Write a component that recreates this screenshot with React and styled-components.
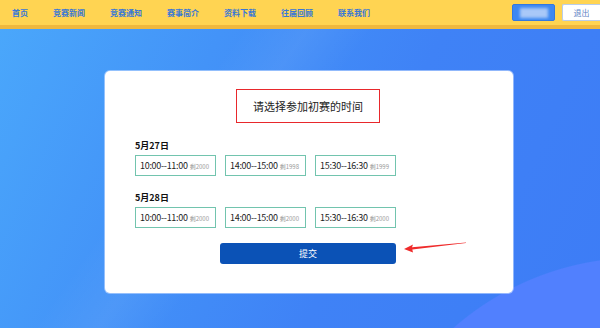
import React from "react";
import styled, { createGlobalStyle } from "styled-components";

const Global = createGlobalStyle`
  html, body { margin: 0; padding: 0; }
  body {
    width: 600px;
    height: 328px;
    overflow: hidden;
    font-family: "Noto Sans CJK SC", "Noto Sans", sans-serif;
  }
`;

const Page = styled.div`
  width: 600px;
  height: 328px;
  display: flex;
  flex-direction: column;
`;

const Header = styled.header`
  height: 25px;
  flex: none;
  background: #ffd452;
  border-bottom: 4px solid #efb83e;
  display: flex;
  align-items: center;
  padding-left: 12px;
`;

const Nav = styled.nav`
  display: flex;
  gap: 25px;
  flex: 1;
`;

const NavItem = styled.a`
  font-size: 8px;
  line-height: 10px;
  font-weight: 700;
  color: #3877d6;
  text-decoration: none;
  padding-top: 1px;
`;

const UserArea = styled.div`
  display: flex;
  gap: 7px;
  align-items: center;
`;

const UserBtn = styled.div`
  width: 43px;
  height: 17px;
  box-sizing: border-box;
  border-radius: 2px;
  background: #3c87f1;
  border: 1px solid #3278e0;
  display: flex;
  align-items: center;
  justify-content: center;
`;

const Blurred = styled.span`
  width: 28px;
  height: 10px;
  background: rgba(205, 222, 250, 0.75);
  filter: blur(1.5px);
`;

const LogoutBtn = styled.div`
  width: 38px;
  height: 17px;
  box-sizing: border-box;
  border-radius: 2px 0 0 2px;
  background: #fff;
  border: 1px solid #b9cdea;
  border-right: none;
  font-size: 8px;
  color: #5c82c4;
  display: flex;
  align-items: center;
  justify-content: center;
`;

const Main = styled.main`
  flex: 1;
  position: relative;
  overflow: hidden;
  padding: 42px 0 0 105px;
  background:
    radial-gradient(circle 283px at 640px 511px, #5180fe 99.6%, rgba(81,128,254,0) 100%),
    linear-gradient(125deg, rgba(255,255,255,0) 30%, rgba(255,255,255,0.06) 38%, rgba(255,255,255,0) 46%),
    linear-gradient(115deg, #4aa7fb 0%, #4393f8 30%, #3f82f6 60%, #3d7cf6 100%);
`;

const Card = styled.section`
  position: relative;
  width: 408px;
  height: 222px;
  box-sizing: border-box;
  background: #fff;
  border-radius: 5px;
  box-shadow: 0 0 0 1px rgba(200, 220, 255, 0.6);
  padding: 18px 30px 0;
  display: flex;
  flex-direction: column;
`;

const TitleBox = styled.div`
  align-self: center;
  width: 144px;
  height: 34px;
  box-sizing: border-box;
  border: 1.5px solid #e8282c;
  display: flex;
  align-items: center;
  justify-content: center;
  font-size: 11px;
  color: #222;
  margin-right: 2px;
`;

const DateLabel = styled.div`
  margin-top: ${p => p.$top}px;
  font-size: 9px;
  line-height: 12px;
  font-weight: 700;
  color: #111;
`;

const SlotRow = styled.div`
  margin-top: 3px;
  display: flex;
  gap: 9px;
`;

const Slot = styled.div`
  width: 81px;
  height: 21px;
  box-sizing: border-box;
  border: 1.5px solid #72c4ae;
  display: flex;
  align-items: center;
  padding-left: 4px;
  gap: 2px;
  white-space: nowrap;
`;

const SlotTime = styled.span`
  font-size: 9px;
  color: #1d1d1d;
  letter-spacing: -0.3px;
`;

const SlotLeft = styled.span`
  font-size: 6px;
  color: #9a9a9a;
  padding-top: 1px;
`;

const Submit = styled.button`
  align-self: center;
  margin-top: 15px;
  margin-right: 2px;
  width: 176px;
  height: 21px;
  border: none;
  border-radius: 3px;
  background: #0b52b6;
  color: #fff;
  font-family: inherit;
  font-size: 9px;
  padding: 0;
`;

const Arrow = styled.svg`
  position: absolute;
  left: 295px;
  top: 170px;
  overflow: visible;
`;

const days = [
  { date: "5月27日", top: 17, slots: [["10:00--11:00", "2000"], ["14:00--15:00", "1998"], ["15:30--16:30", "1999"]] },
  { date: "5月28日", top: 16, slots: [["10:00--11:00", "2000"], ["14:00--15:00", "2000"], ["15:30--16:30", "2000"]] },
];

export default function App() {
  const navs = ["首页", "竞赛新闻", "竞赛通知", "赛事简介", "资料下载", "往届回顾", "联系我们"];
  return (
    <Page>
      <Global />
      <Header>
        <Nav>
          {navs.map(n => <NavItem key={n}>{n}</NavItem>)}
        </Nav>
        <UserArea>
          <UserBtn><Blurred /></UserBtn>
          <LogoutBtn>退出</LogoutBtn>
        </UserArea>
      </Header>
      <Main>
        <Card>
          <TitleBox>请选择参加初赛的时间</TitleBox>
          {days.map(d => (
            <React.Fragment key={d.date}>
              <DateLabel $top={d.top}>{d.date}</DateLabel>
              <SlotRow>
                {d.slots.map(([t, n]) => (
                  <Slot key={t}>
                    <SlotTime>{t}</SlotTime>
                    <SlotLeft>剩{n}</SlotLeft>
                  </Slot>
                ))}
              </SlotRow>
            </React.Fragment>
          ))}
          <Submit>提交</Submit>
          <Arrow width="70" height="12" viewBox="0 0 70 12">
            <polygon points="4,8 13,3.5 12,6.3 66,1.5 66,2.1 12.3,8.5 13,11.5" fill="#ef2b2b" />
          </Arrow>
        </Card>
      </Main>
    </Page>
  );
}
